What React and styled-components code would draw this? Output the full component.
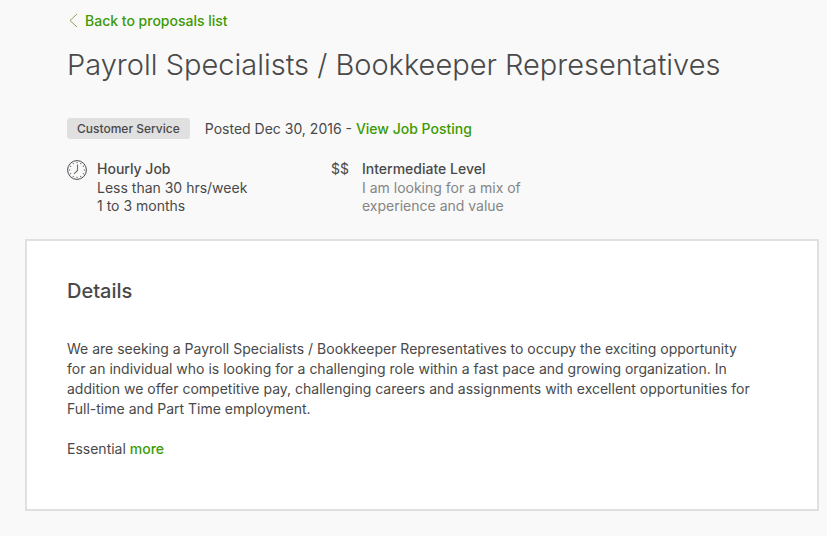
import React from "react";
import styled, { createGlobalStyle } from "styled-components";

const App = () => {
  return (
    <Page>
      <GlobalStyle />
      <Header>
        <BackLink href="#proposals">
          <svg width="9" height="14" viewBox="0 0 9 14" fill="none">
            <path d="M8 0L1 6.5L8 13" stroke="#93a04a" />
          </svg>
          Back to proposals list
        </BackLink>
        <Title>Payroll Specialists / Bookkeeper Representatives</Title>
        <Meta>
          <Tag>Customer Service</Tag>
          <span>
            Posted Dec 30, 2016 - <Link href="#posting">View Job Posting</Link>
          </span>
        </Meta>
        <Features>
          <Feature>
            <ClockIcon />
            <div>
              <FeatureTitle>Hourly Job</FeatureTitle>
              <FeatureText>
                Less than 30 hrs/week
                <br />1 to 3 months
              </FeatureText>
            </div>
          </Feature>
          <Feature>
            <Rate>$$</Rate>
            <div>
              <FeatureTitle>Intermediate Level</FeatureTitle>
              <FeatureText $muted>
                I am looking for a mix of
                <br />
                experience and value
              </FeatureText>
            </div>
          </Feature>
        </Features>
      </Header>
      <Card>
        <CardTitle>Details</CardTitle>
        <Paragraph>
          We are seeking a Payroll Specialists / Bookkeeper Representatives to
          occupy the exciting opportunity
          <br />
          for an individual who is looking for a challenging role within a fast
          pace and growing organization. In
          <br />
          addition we offer competitive pay, challenging careers and assignments
          with excellent opportunities for
          <br />
          Full-time and Part Time employment.
        </Paragraph>
        <Paragraph>
          Essential <Link href="#more">more</Link>
        </Paragraph>
      </Card>
    </Page>
  );
};

const ClockIcon = () => (
  <Clock viewBox="0 0 20 20" fill="none" stroke="#494949">
    <circle cx="10" cy="10" r="9.4" />
    <path d="M10.5 4.5V10.5L7 13.8" stroke="#77705f" strokeWidth="1.1" />
    {[0, 30, 60, 90, 120, 150, 180, 210, 240, 270, 300, 330].map((angle) => (
      <path
        key={angle}
        d="M10 2V3.2"
        stroke="#5a6580"
        transform={`rotate(${angle} 10 10)`}
      />
    ))}
  </Clock>
);

const GlobalStyle = createGlobalStyle`
  * {
    box-sizing: border-box;
  }
  body {
    margin: 0;
    background: #f9f9f9;
    color: #494949;
    font-family: Inter, "Open Sans", sans-serif;
    font-size: 14px;
    line-height: 20px;
  }
`;
const Page = styled.main`
  padding: 11px 8px 24px 25px;
`;
const Header = styled.header`
  padding: 0 42px;
`;
const Link = styled.a`
  color: #3c9a04;
  font-weight: 500;
  text-decoration: none;
`;
const BackLink = styled(Link)`
  display: inline-flex;
  align-items: center;
  gap: 7px;
  margin-left: 2px;
`;
const Title = styled.h1`
  margin: 12px 0 33px;
  font-size: 29px;
  font-weight: 300;
  line-height: 40px;
`;
const Meta = styled.div`
  display: flex;
  align-items: center;
  gap: 15px;
`;
const Tag = styled.span`
  padding: 0 10px;
  border-radius: 3px;
  background: #e0e0e0;
  font-size: 12px;
  font-weight: 500;
  line-height: 21px;
`;
const Features = styled.section`
  display: grid;
  grid-template-columns: 264px 1fr;
  margin-top: 20px;
`;
const Feature = styled.div`
  display: flex;
`;
const Clock = styled.svg`
  width: 20px;
  height: 20px;
  margin: 1px 10px 0 0;
`;
const Rate = styled.span`
  width: 31px;
`;
const FeatureTitle = styled.h2`
  margin: 0;
  font-size: 14px;
  font-weight: 500;
  line-height: 20px;
`;
const FeatureText = styled.p`
  margin: 0;
  color: ${({ $muted }) => ($muted ? "#858585" : "inherit")};
  line-height: 18px;
`;
const Card = styled.section`
  margin-top: 24px;
  padding: 40px 40px 30px;
  border: 2px solid #e0e0e0;
  background: #fff;
`;
const CardTitle = styled.h2`
  margin: 0 0 38px;
  font-size: 20px;
  font-weight: 500;
  line-height: 20px;
`;
const Paragraph = styled.p`
  margin: 0 0 20px;
`;
export default App;
